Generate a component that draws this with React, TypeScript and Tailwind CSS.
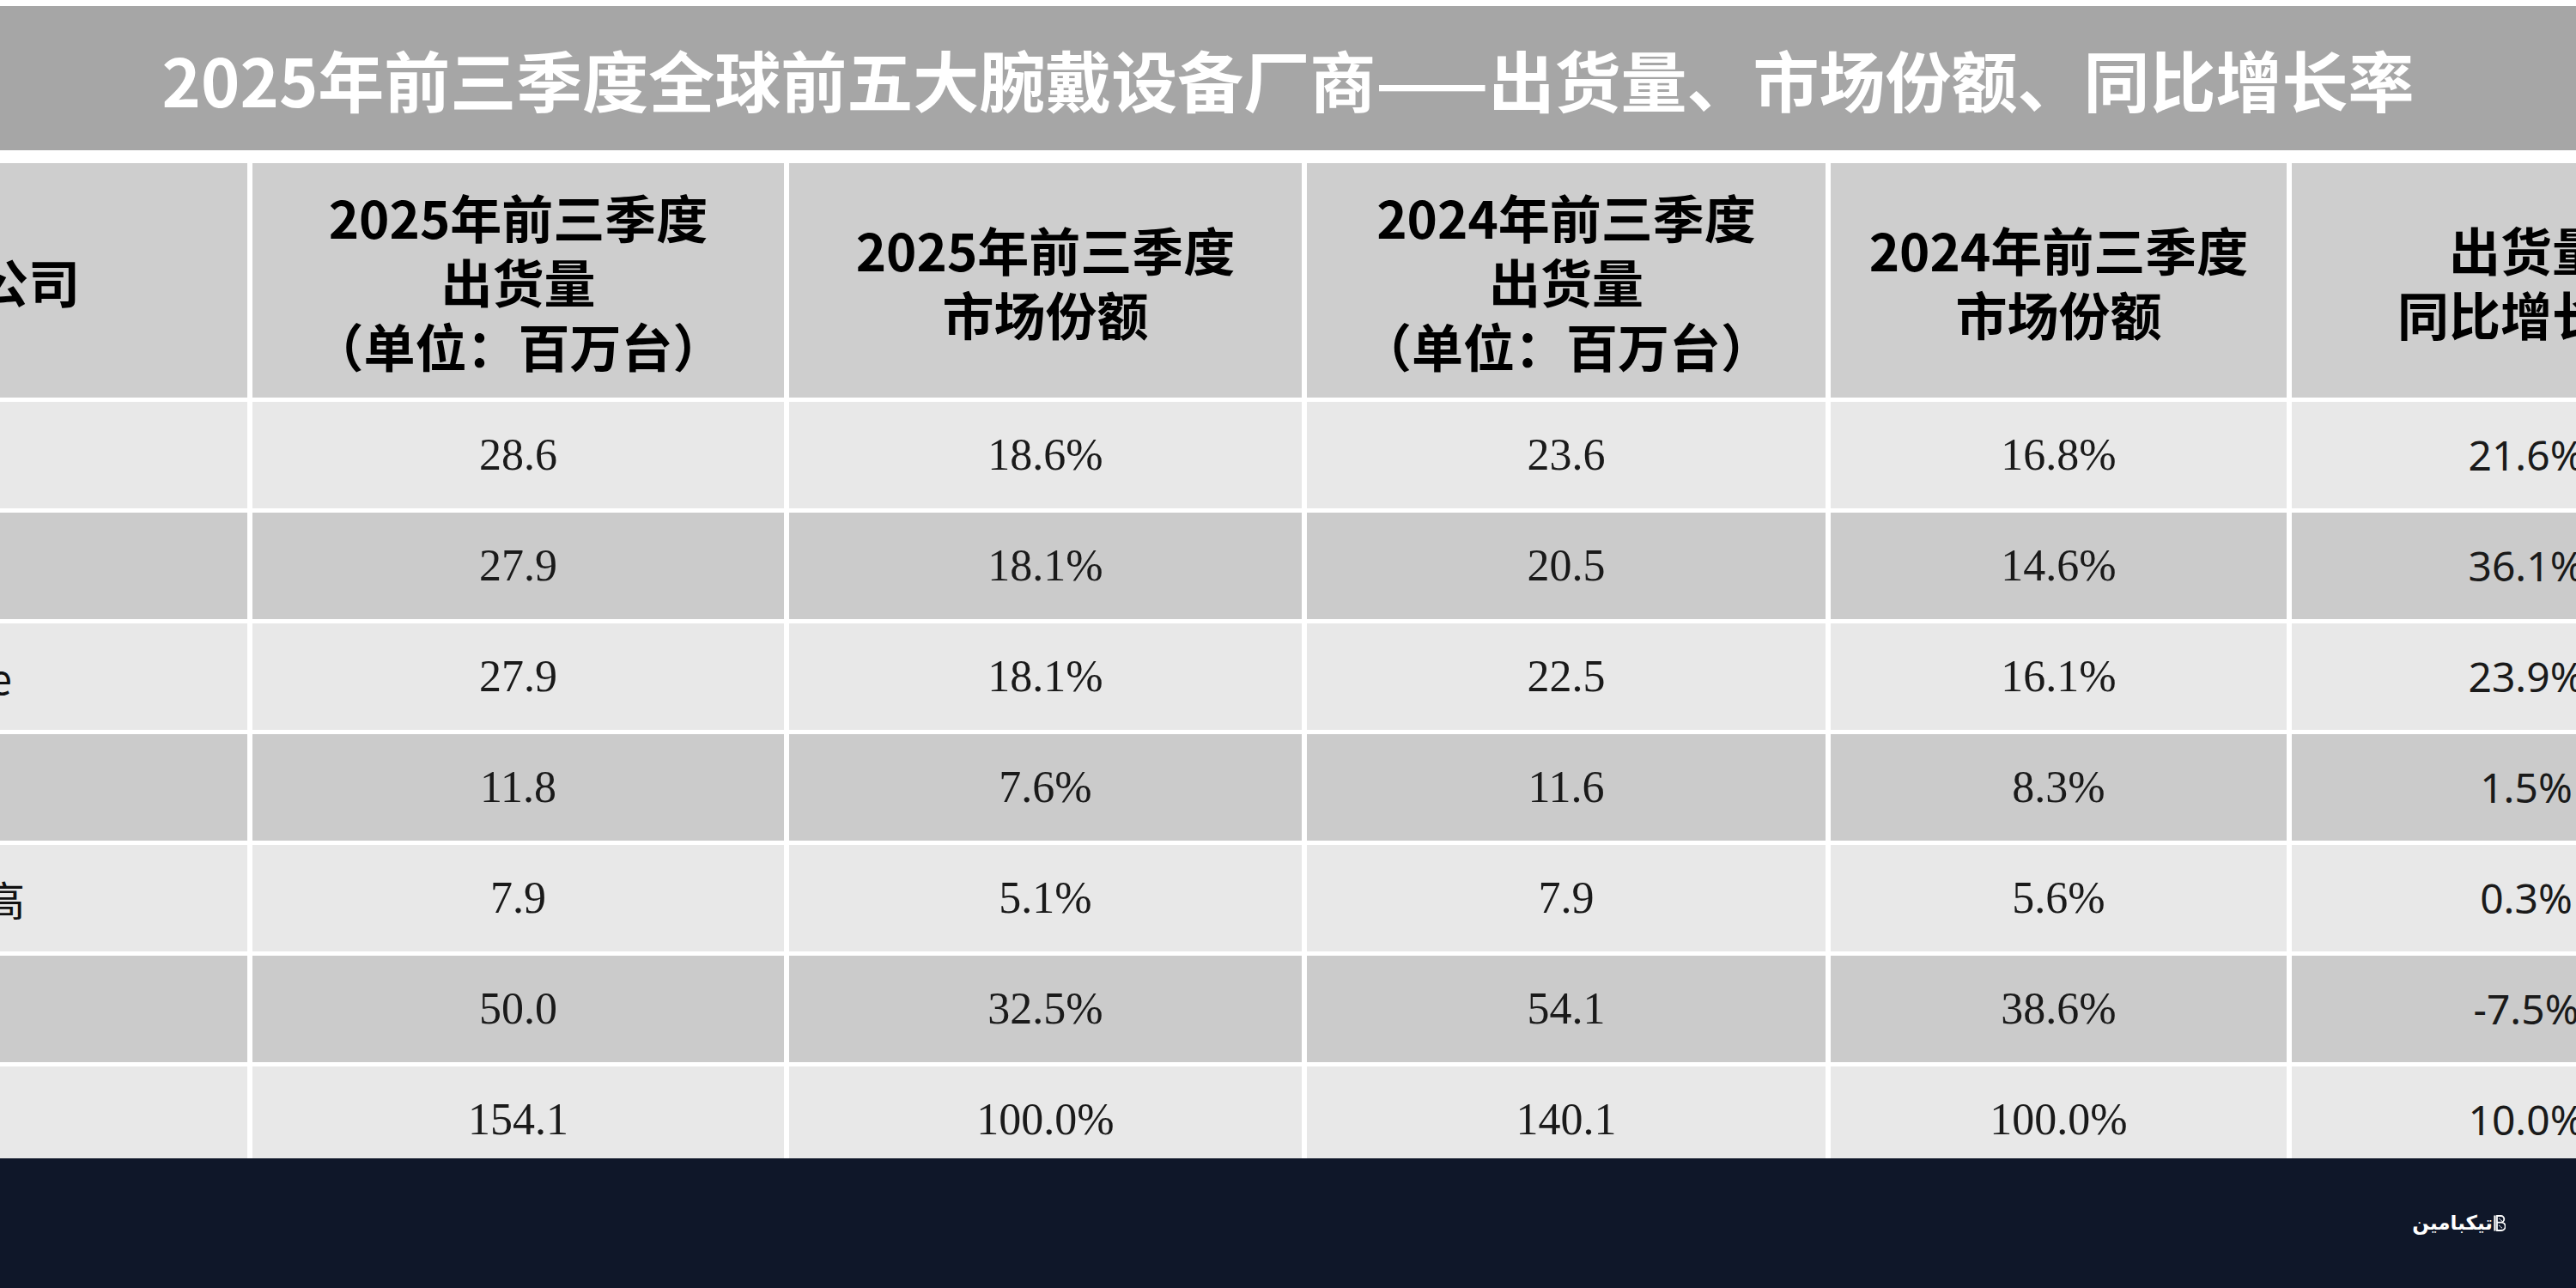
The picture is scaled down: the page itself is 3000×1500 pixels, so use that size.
const cjk = "font-['Noto_Sans_CJK_SC','Noto_Sans',sans-serif]"

type Row = {
  name: string
  ship25: string
  share25: string
  ship24: string
  share24: string
  growth: string
}

const rows: Row[] = [
  { name: "华为", ship25: "28.6", share25: "18.6%", ship24: "23.6", share24: "16.8%", growth: "21.6%" },
  { name: "小米", ship25: "27.9", share25: "18.1%", ship24: "20.5", share24: "14.6%", growth: "36.1%" },
  { name: "Apple", ship25: "27.9", share25: "18.1%", ship24: "22.5", share24: "16.1%", growth: "23.9%" },
  { name: "三星", ship25: "11.8", share25: "7.6%", ship24: "11.6", share24: "8.3%", growth: "1.5%" },
  { name: "步步高", ship25: "7.9", share25: "5.1%", ship24: "7.9", share24: "5.6%", growth: "0.3%" },
  { name: "其他", ship25: "50.0", share25: "32.5%", ship24: "54.1", share24: "38.6%", growth: "-7.5%" },
  { name: "总计", ship25: "154.1", share25: "100.0%", ship24: "140.1", share24: "100.0%", growth: "10.0%" },
]

function HeadCell({ lines }: { lines: string[] }) {
  return (
    <div className={`bg-[#cecece] flex flex-col items-center justify-center text-black font-bold text-[60px] leading-[75px] ${cjk}`}>
      {lines.map((l) => (
        <span key={l} className="whitespace-nowrap">{l}</span>
      ))}
    </div>
  )
}

function Logo() {
  return (
    <div className="flex items-center gap-[1px] text-white">
      <span dir="rtl" className="font-['DejaVu_Sans',sans-serif] font-bold text-[23px] leading-none">تیکبامین</span>
      <svg width="14" height="21" viewBox="0 0 14 20" fill="none">
        <path d="M1.5 1v18" stroke="white" strokeWidth="2.2" />
        <path d="M4 1.5h4.5a3.8 3.8 0 0 1 0 7.6H4V1.5zM4 9.1h5a4.6 4.6 0 0 1 0 9.4H4V9.1z" stroke="white" strokeWidth="1.8" />
        <path d="M6 4.5c2 0 2 3 4 3M6 12.5c2 0 2 3 4 3" stroke="white" strokeWidth="0.9" />
      </svg>
    </div>
  )
}

export default function App() {
  return (
    <div className="w-[3000px] h-[1500px] flex flex-col bg-white overflow-hidden">
      <div className="h-[1349px] overflow-hidden bg-white pt-[7px] flex flex-col">
        <div className="h-[168px] shrink-0 bg-[#a6a6a6] flex items-center justify-center">
          <h1 className={`text-white font-bold text-[77px] leading-none whitespace-nowrap ${cjk}`}>
            2025年前三季度全球前五大腕戴设备厂商——出货量、市场份额、同比增长率
          </h1>
        </div>

        <div className="mt-[15px] -ml-[222px] grid grid-cols-[510px_619px_597px_604px_531px_546px] grid-rows-[273px_repeat(7,124px)] gap-x-[6px] gap-y-[5px] bg-white">
          <HeadCell lines={["公司"]} />
          <HeadCell lines={["2025年前三季度", "出货量", "（单位：百万台）"]} />
          <HeadCell lines={["2025年前三季度", "市场份额"]} />
          <HeadCell lines={["2024年前三季度", "出货量", "（单位：百万台）"]} />
          <HeadCell lines={["2024年前三季度", "市场份额"]} />
          <HeadCell lines={["出货量", "同比增长率"]} />

          {rows.map((r, i) => {
            const bg = i % 2 === 0 ? "bg-[#e8e8e8]" : "bg-[#cbcbcb]"
            const num = `${bg} flex items-center justify-center text-[#1a1a1a] text-[52px] font-['Liberation_Serif',serif]`
            return [
              <div key={`n${i}`} className={`${bg} flex items-center pl-[107px] text-[#111] text-[48px] ${cjk}`}>{r.name}</div>,
              <div key={`a${i}`} className={num}>{r.ship25}</div>,
              <div key={`b${i}`} className={num}>{r.share25}</div>,
              <div key={`c${i}`} className={num}>{r.ship24}</div>,
              <div key={`d${i}`} className={num}>{r.share24}</div>,
              <div key={`e${i}`} className={`${bg} flex items-center justify-center text-[#1a1a1a] text-[48px] font-['Noto_Sans',sans-serif]`}>{r.growth}</div>,
            ]
          })}
        </div>
      </div>

      <footer className="flex-1 bg-[#0f1729] flex items-center justify-end pr-[82px]">
        <Logo />
      </footer>
    </div>
  )
}
